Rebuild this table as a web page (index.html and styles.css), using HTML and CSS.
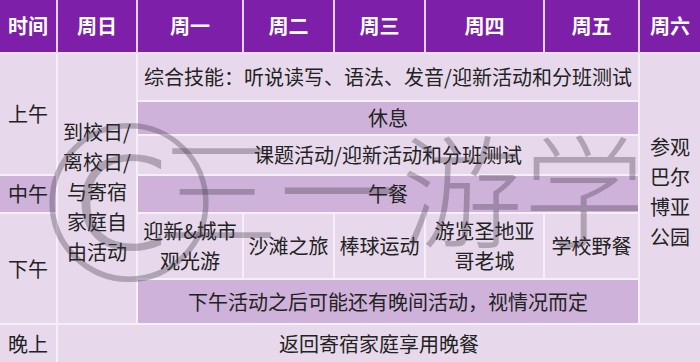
FILE: index.html
```html
<!DOCTYPE html>
<html lang="zh-CN">
<head>
<meta charset="UTF-8">
<meta name="viewport" content="width=device-width, initial-scale=1.0">
<title>课程安排</title>

<link rel="stylesheet" href="styles.css">
</head>

<body>

<div class="sheet">

<table class="schedule">
<colgroup>
<col style="width:58px">
<col style="width:80px">
<col style="width:106px">
<col style="width:91px">
<col style="width:91px">
<col style="width:119px">
<col style="width:95px">
<col style="width:62px">
</colgroup>

<tr class="head">
<th>时间</th>
<th>周日</th>
<th>周一</th>
<th>周二</th>
<th>周三</th>
<th>周四</th>
<th>周五</th>
<th>周六</th>
</tr>

<tr class="r-skills">
<td rowspan="3">上午</td>
<td rowspan="6" class="long">到校日/<br>离校日/<br>与寄宿<br>家庭自<br>由活动</td>
<td colspan="5">综合技能：听说读写、语法、发音/迎新活动和分班测试</td>
<td rowspan="6" class="long">参观<br>巴尔<br>博亚<br>公园</td>
</tr>

<tr class="r-break">
<td colspan="5" class="dark">休息</td>
</tr>

<tr class="r-topic">
<td colspan="5">课题活动/迎新活动和分班测试</td>
</tr>

<tr class="r-lunch">
<td class="dark">中午</td>
<td colspan="5" class="dark">午餐</td>
</tr>

<tr class="r-trips">
<td rowspan="2">下午</td>
<td>迎新&amp;城市<br>观光游</td>
<td>沙滩之旅</td>
<td>棒球运动</td>
<td>游览圣地亚<br>哥老城</td>
<td>学校野餐</td>
</tr>

<tr class="r-note">
<td colspan="5" class="dark">下午活动之后可能还有晚间活动，视情况而定</td>
</tr>

<tr class="r-night">
<td>晚上</td>
<td colspan="7">返回寄宿家庭享用晚餐</td>
</tr>
</table>

<!-- watermark over the table -->
<div class="wm-mark">©</div>
<div class="wm-text">三一游学</div>

</div>

</body>
</html>
```

FILE: styles.css
```css
body{
margin:0;
background:#e7d9eb;
font-family:"Noto Sans CJK SC","Liberation Sans",sans-serif;
overflow:hidden;
}

.sheet{
position:relative;
width:700px;
height:362px;
overflow:hidden;
}

.schedule{
width:702px;
table-layout:fixed;
border-collapse:separate;
border-spacing:0;
}

.schedule th,
.schedule td{
padding:0 2px;
border-right:2px solid #f5eff7;
border-bottom:2px solid #f5eff7;
text-align:center;
vertical-align:middle;
font-size:20px;
line-height:30px;
color:#222;
background:#e7d9eb;
}

.schedule td.long{
padding-top:6px;
}

.schedule th{
background:#7d1fa8;
color:white;
font-weight:bold;
border-right-color:#e4d3ec;
border-bottom-color:#ece1f1;
}

.schedule td.dark{
background:#cfb2da;
}

.head{height:54px;}
.r-skills{height:48px;}
.r-break{height:34px;}
.r-topic{height:40px;}
.r-lunch{height:38px;}
.r-trips{height:66px;}
.r-note{height:45px;}
.r-night{height:40px;}

.wm-mark,
.wm-text{
position:absolute;
line-height:1;
color:rgba(70,60,75,0.35);
white-space:nowrap;
pointer-events:none;
}

.wm-mark{
left:19px;
top:96px;
font-family:"DejaVu Sans",sans-serif;
font-size:220px;
font-weight:200;
}

.wm-text{
left:157px;
top:124px;
font-size:122px;
font-weight:300;
}
```
